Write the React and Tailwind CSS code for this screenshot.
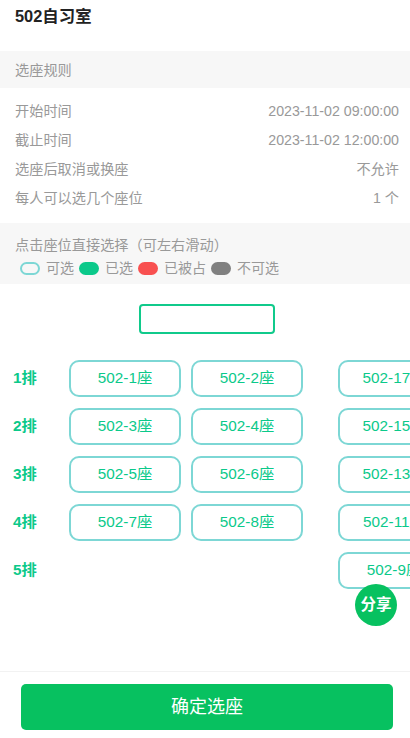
import React from 'react'

const font = { fontFamily: '"Liberation Sans", "Noto Sans CJK SC", sans-serif' }

const rules = [
  ['开始时间', '2023-11-02 09:00:00'],
  ['截止时间', '2023-11-02 12:00:00'],
  ['选座后取消或换座', '不允许'],
  ['每人可以选几个座位', '1 个'],
]

const rows = [
  { label: '1排', seats: ['502-1座', '502-2座', '502-17座'] },
  { label: '2排', seats: ['502-3座', '502-4座', '502-15座'] },
  { label: '3排', seats: ['502-5座', '502-6座', '502-13座'] },
  { label: '4排', seats: ['502-7座', '502-8座', '502-11座'] },
  { label: '5排', seats: [null, null, '502-9座'] },
]

function Seat({ name }) {
  if (!name) return <div className="w-[112px] h-[37px] shrink-0" />
  return (
    <div className="w-[112px] h-[37px] shrink-0 rounded-[10px] border-2 border-[#7dd7d5] flex items-center justify-center text-[15.3px] text-[#0bc98a]">
      {name}
    </div>
  )
}

function Legend({ className, label }) {
  return (
    <div className="flex items-center">
      <span className={`w-[20px] h-[13px] rounded-full ${className}`} />
      <span className="ml-[6px] mr-[5px]">{label}</span>
    </div>
  )
}

export default function App() {
  return (
    <div className="w-[410px] h-[738px] bg-white flex flex-col relative overflow-hidden" style={font}>
      <div className="flex-1 overflow-hidden">
        <div className="h-[51px] px-[15px] pt-[4px] text-[16.4px] font-bold text-[#222]">502自习室</div>

        <div className="h-[37px] bg-[#f7f7f7] px-[15px] flex items-center pt-[3px] text-[14.2px] text-[#999]">
          选座规则
        </div>

        <div className="pt-[9px] pb-[10px] pl-[15px] pr-[11px] text-[14.2px] text-[#999]">
          {rules.map(([k, v]) => (
            <div key={k} className="h-[29px] flex items-center justify-between">
              <span>{k}</span>
              <span>{v}</span>
            </div>
          ))}
        </div>

        <div className="h-[61px] bg-[#f7f7f7] px-[15px] pt-[12px] text-[14.2px] text-[#999]">
          <div className="leading-[20px]">点击座位直接选择（可左右滑动）</div>
          <div className="flex items-center mt-[3px] ml-[5px] leading-[20px] text-[14px]">
            <Legend className="border-2 border-[#7dd7d5]" label="可选" />
            <Legend className="bg-[#0bc98a]" label="已选" />
            <Legend className="bg-[#f85050]" label="已被占" />
            <Legend className="bg-[#808080]" label="不可选" />
          </div>
        </div>

        <div className="pt-[20px]">
          <div className="ml-[139px] w-[136px] h-[30px] rounded-[4px] border-2 border-[#10ca8b]" />
        </div>

        <div className="pt-[20px]">
          {rows.map((r) => (
            <div key={r.label} className="h-[48px] flex items-center">
              <div className="w-[69px] shrink-0 pl-[13px] text-[15.3px] font-bold text-[#0bc98a]">{r.label}</div>
              <Seat name={r.seats[0]} />
              <div className="w-[10px] shrink-0" />
              <Seat name={r.seats[1]} />
              <div className="w-[35px] shrink-0" />
              <Seat name={r.seats[2]} />
            </div>
          ))}
        </div>
      </div>

      <div className="absolute left-[355px] top-[584px] w-[42px] h-[42px] rounded-full bg-[#07c160] flex items-center justify-center text-white font-bold text-[15.5px]">
        分享
      </div>

      <div className="border-t border-[#f2f2f2] pt-[12px] pb-[8px] pl-[21px] pr-[17px]">
        <div className="h-[46px] rounded-[5px] bg-[#07c160] flex items-center justify-center text-white text-[18px]">
          确定选座
        </div>
      </div>
    </div>
  )
}
